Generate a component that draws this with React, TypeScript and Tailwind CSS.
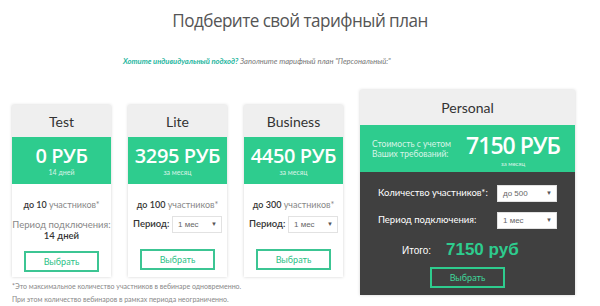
const green = 'bg-[#2ecc8e]';

function Select({ value, w }: { value: string; w: string }) {
  return (
    <div className={`${w} h-[17px] bg-white border border-[#e2e2e2] flex items-center justify-between pl-[5px] pr-[4px] text-[8px] text-[#666] font-['Liberation_Sans']`}>
      <span>{value}</span>
      <span className="text-[6px] text-[#555]">▼</span>
    </div>
  );
}

function Button({ dark = false }: { dark?: boolean }) {
  return (
    <div
      className={`w-[75px] h-[21px] border-2 ${dark ? 'border-[#2ecc8e] text-[#3fd79a]' : 'border-[#3cc593] text-[#2bbf86]'} flex items-center justify-center text-[9px]`}
    >
      Выбрать
    </div>
  );
}

function SmallCard({ name, price, sub, users, test = false }: { name: string; price: string; sub: string; users: string; test?: boolean }) {
  return (
    <div className="w-[99px] shadow-[0_0_3px_rgba(0,0,0,0.18)] bg-white">
      <div className="h-[32px] bg-[#efefef] flex items-center justify-center text-[14px] text-[#333]">{name}</div>
      <div className={`h-[47px] ${green} flex flex-col items-center justify-center text-white`}>
        <div className="text-[20px] font-semibold leading-[24px] whitespace-nowrap font-['Open_Sans'] tracking-[-0.4px]">{price}</div>
        <div className="text-[7px] leading-[9px] opacity-80">{sub}</div>
      </div>
      <div className="h-[93px] flex flex-col items-center pt-[15px]">
        <div className="text-[9px] leading-[12px] text-[#888]">
          <span className="font-semibold text-[#333]">до {users}</span> участников*
        </div>
        {test ? (
          <div className="mt-[8px] flex flex-col items-center leading-[11px]">
            <span className="text-[9.5px] text-[#888]">Период подключения:</span>
            <span className="text-[9.5px] font-semibold text-[#333]">14 дней</span>
          </div>
        ) : (
          <div className="mt-[5px] w-full flex items-center justify-between pl-[5px] pr-[5px]">
            <span className="text-[9.5px] font-semibold text-[#333]">Период:</span>
            <Select value="1 мес" w="w-[50px]" />
          </div>
        )}
        <div className={test ? 'mt-[10px]' : 'mt-[16px]'}>
          <Button />
        </div>
      </div>
    </div>
  );
}

export default function App() {
  return (
    <div className="w-[600px] h-[306px] bg-white overflow-hidden font-['Lato',sans-serif]">
      <h1 className="text-center text-[19px] leading-[26px] text-[#555] pt-[7px] font-['Open_Sans',sans-serif] tracking-[-0.6px] scale-x-[0.9]">Подберите свой тарифный план</h1>
      <p className="mt-[22px] pl-[123px] text-[7.6px] leading-[12px] italic text-[#777]">
        <span className="font-bold text-[#1fb6a0]">Хотите индивидуальный подход?</span> Заполните тарифный план "Персональный:"
      </p>
      <div className="mt-[23px] flex items-start pl-[12px] gap-[17px]">
        <div className="flex flex-col">
          <div className="mt-[15px] flex gap-[17px]">
            <SmallCard name="Test" price="0 РУБ" sub="14 дней" users="10" test />
            <SmallCard name="Lite" price="3295 РУБ" sub="за месяц" users="100" />
            <SmallCard name="Business" price="4450 РУБ" sub="за месяц" users="300" />
          </div>
          <div className="mt-[3px] text-[7px] leading-[13px] text-[#888]">
            <p>*Это максимальное количество участников в вебинаре одновременно.</p>
            <p>При этом количество вебинаров в рамках периода неограниченно.</p>
          </div>
        </div>
        <div className="w-[215px] shadow-[0_0_3px_rgba(0,0,0,0.18)]">
          <div className="h-[35px] bg-[#efefef] flex items-center justify-center text-[14px] text-[#333]">Personal</div>
          <div className={`h-[47px] ${green} flex items-center text-white`}>
            <div className="w-[103px] pl-[12px] text-[8.5px] leading-[10px] opacity-80">
              Стоимость с учетом
              <br />
              Ваших требований:
            </div>
            <div className="flex flex-col items-center w-[100px]">
              <div className="text-[23px] font-semibold leading-[30px] whitespace-nowrap font-['Open_Sans'] tracking-[-1px]">7150 РУБ</div>
              <div className="text-[6px] leading-[7px] opacity-80">за месяц</div>
            </div>
          </div>
          <div className="h-[123px] bg-[#404040] flex flex-col pt-[13px]">
            <div className="flex items-center justify-between pl-[18px] pr-[18px]">
              <span className="text-[9.5px] text-white">Количество участников*:</span>
              <Select value="до 500" w="w-[60px]" />
            </div>
            <div className="mt-[10px] flex items-center justify-between pl-[18px] pr-[18px]">
              <span className="text-[9.5px] text-white">Период подключения:</span>
              <Select value="1 мес" w="w-[60px]" />
            </div>
            <div className="mt-[10px] flex items-center pl-[42px] gap-[15px] font-['Liberation_Sans']">
              <span className="text-[10px] text-white">Итого:</span>
              <span className="text-[17px] font-bold text-[#2ecc8e] leading-[22px]">7150 руб</span>
            </div>
            <div className="mt-[6px] pl-[70px]">
              <Button dark />
            </div>
          </div>
        </div>
      </div>
    </div>
  );
}
